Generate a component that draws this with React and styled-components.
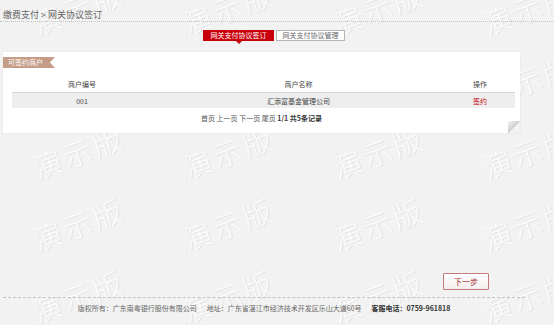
import React from "react";
import styled, { createGlobalStyle } from "styled-components";

const GlobalStyle = createGlobalStyle`
  html, body {
    margin: 0;
    padding: 0;
    background: #f2f2f2;
  }
  body {
    font-family: "Noto Sans CJK SC", "Noto Sans", sans-serif;
    color: #555;
  }
`;

const rows = [-7, 65, 137, 209, 281, 353];
const cols = [-120, 30, 180, 330, 480];

const Page = () => {
  return (
    <>
      <GlobalStyle />
      <Screen>
        <Watermarks>
          {rows.map((y) =>
            cols.map((x) => (
              <Mark key={`${x}-${y}`} $x={x} $y={y}>
                演示版
              </Mark>
            ))
          )}
        </Watermarks>

        <Content>
          <Breadcrumb>缴费支付 &gt; 网关协议签订</Breadcrumb>

          <Tabs>
            <Tab $active>网关支付协议签订</Tab>
            <Tab>网关支付协议管理</Tab>
          </Tabs>

          <Card>
            <Ribbon>可签约商户</Ribbon>
            <Table>
              <thead>
                <tr>
                  <Th $w={140}>商户编号</Th>
                  <Th>商户名称</Th>
                  <Th $w={70}>操作</Th>
                </tr>
              </thead>
              <tbody>
                <tr>
                  <Td>001</Td>
                  <Td>汇添富基金管理公司</Td>
                  <Td $link>签约</Td>
                </tr>
              </tbody>
            </Table>
            <Pager>
              首页 上一页 下一页 尾页 <b>1/1 共5条记录</b>
            </Pager>
          </Card>

          <Actions>
            <NextButton>下一步</NextButton>
          </Actions>

          <Footer>
            版权所有：广东南粤银行股份有限公司<Gap />地址：广东省湛江市经济技术开发区乐山大道60号<Gap />
            <strong>客服电话：0759-961818</strong>
          </Footer>
        </Content>
      </Screen>
    </>
  );
};

const Screen = styled.div`
  position: relative;
  width: 554px;
  height: 325px;
  overflow: hidden;
`;

const Watermarks = styled.div`
  position: absolute;
  inset: 0;
  pointer-events: none;
  z-index: 0;
`;

const Mark = styled.span`
  position: absolute;
  left: ${(p) => p.$x}px;
  top: ${(p) => p.$y}px;
  font-size: 29px;
  font-weight: 300;
  letter-spacing: 3px;
  line-height: 1;
  white-space: nowrap;
  color: #fcfcfc;
  text-shadow: 1px 1px 1px rgba(0, 0, 0, 0.08);
  transform: rotate(-20deg);
  transform-origin: center;
`;

const Content = styled.div`
  position: relative;
  z-index: 1;
`;

const Breadcrumb = styled.div`
  height: 22px;
  box-sizing: border-box;
  padding: 9px 0 0 3px;
  font-size: 9px;
  line-height: 12px;
  color: #666;
  border-bottom: 1px dotted #c4c4c4;
`;

const Tabs = styled.div`
  display: flex;
  gap: 2px;
  padding: 8px 0 0 203px;
`;

const Tab = styled.div`
  position: relative;
  width: ${(p) => (p.$active ? "71px" : "69px")};
  height: 11px;
  box-sizing: border-box;
  text-align: center;
  font-size: 7px;
  line-height: ${(p) => (p.$active ? "11px" : "9px")};
  color: ${(p) => (p.$active ? "#fff" : "#666")};
  background: ${(p) => (p.$active ? "#c8000b" : "#fff")};
  border: ${(p) => (p.$active ? "none" : "1px solid #b5b5b5")};

  &::after {
    content: "";
    display: ${(p) => (p.$active ? "block" : "none")};
    position: absolute;
    left: 50%;
    bottom: -3px;
    margin-left: -3px;
    border-left: 3px solid transparent;
    border-right: 3px solid transparent;
    border-top: 3px solid #c8000b;
  }
`;

const Card = styled.div`
  position: relative;
  margin: 11px 0 0 3px;
  width: 517px;
  padding: 5px 0 9px;
  background: #fff;
  box-shadow: 0 0 1px rgba(0, 0, 0, 0.15);

  &::after {
    content: "";
    position: absolute;
    right: 0;
    bottom: 0;
    width: 12px;
    height: 12px;
    background: linear-gradient(
      to top left,
      #f2f2f2 0,
      #f2f2f2 50%,
      #cfcfcf 50%,
      #f4f4f4 100%
    );
  }
`;

const Ribbon = styled.div`
  width: 52px;
  height: 11px;
  padding-left: 5px;
  box-sizing: border-box;
  background: #c49c87;
  color: #fff;
  font-size: 7px;
  line-height: 11px;
  clip-path: polygon(0 0, 100% 0, calc(100% - 5px) 50%, 100% 100%, 0 100%);
`;

const Table = styled.table`
  width: 503px;
  margin: 8px 0 0 9px;
  border-collapse: collapse;
  font-size: 7px;
`;

const Th = styled.th`
  width: ${(p) => (p.$w ? `${p.$w}px` : "auto")};
  height: 16px;
  padding: 0;
  font-weight: normal;
  color: #444;
  border-bottom: 1px solid #d6d6d6;
`;

const Td = styled.td`
  height: 15px;
  padding: 0;
  text-align: center;
  background: #eeeeee;
  color: ${(p) => (p.$link ? "#c8000b" : "#444")};
`;

const Pager = styled.div`
  margin-top: 4px;
  text-align: center;
  font-size: 7px;
  line-height: 12px;
  color: #555;

  b {
    color: #333;
  }
`;

const Actions = styled.div`
  display: flex;
  justify-content: flex-end;
  padding: 140px 65px 0 0;
`;

const NextButton = styled.button`
  width: 46px;
  height: 17px;
  padding: 0;
  border: 1px solid #c77a7a;
  border-radius: 1px;
  background: linear-gradient(#fff, #f6eeee);
  color: #a02828;
  font-family: inherit;
  font-size: 8px;
  cursor: pointer;
`;

const Footer = styled.div`
  margin: 7px 29px 0 3px;
  border-top: 1px dashed #c4c4c4;
  padding-top: 4px;
  text-align: center;
  font-size: 7px;
  line-height: 12px;
  color: #666;

  strong {
    color: #333;
  }
`;

const Gap = styled.span`
  display: inline-block;
  width: 10px;
`;

export default Page;
